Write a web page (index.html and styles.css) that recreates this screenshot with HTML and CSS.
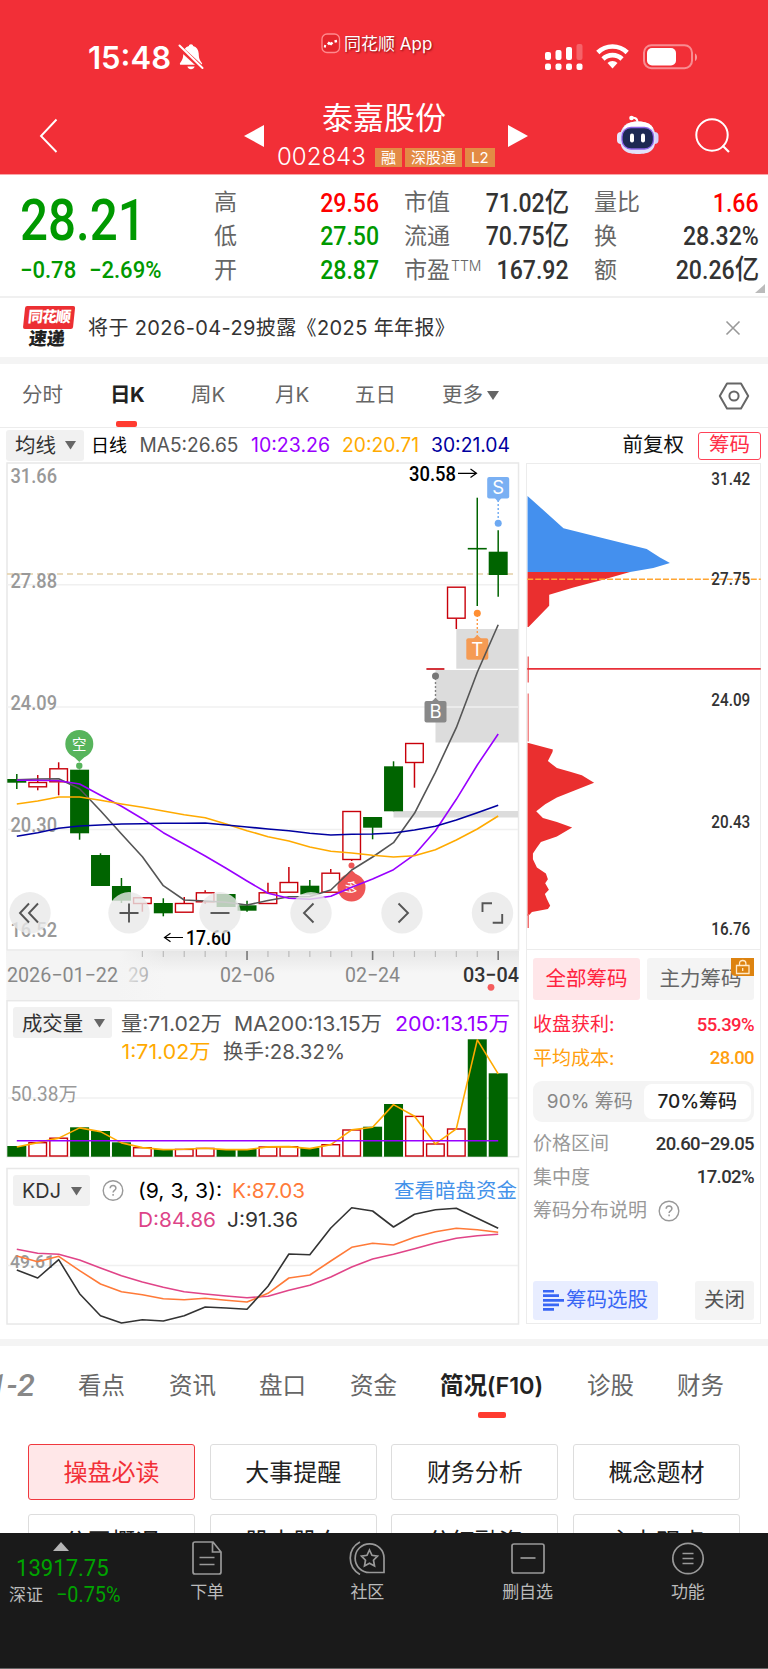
FILE: index.html
```html
<!DOCTYPE html>
<html lang="zh-CN">
<head>
<meta charset="utf-8">
<title>泰嘉股份 002843</title>
<link rel="stylesheet" href="styles.css">
</head>
<body>
<div class="app">
  <header class="top">
    <div class="status">
      <div class="clock">15:48</div>
      <svg class="bell" width="28" height="28" viewBox="0 0 28 28"><path d="M14 1.2c1.300 0 2 .8 2.100 1.800 3.600 1 5.400 3.800 5.600 7.600.2 5 1 6.600 3.200 9.400.5.8.2 1.800-.8 1.800H3.900c-1 0-1.300-1-.8-1.800 2.200-2.800 3-4.400 3.200-9.400.2-3.800 2-6.600 5.600-7.600.1-1 .8-1.800 2.100-1.800zM10.400 23.400h7.200c-.5 1.800-1.900 2.800-3.600 2.800s-3.100-1-3.600-2.800z" fill="#fff"/><path d="M1.500 3.500l24 22" stroke="#f22f37" stroke-width="5"/><path d="M2.500 2.500l23 22.500" stroke="#fff" stroke-width="2" stroke-linecap="round"/></svg>
      <div class="appname">
        <svg width="20" height="21" viewBox="0 0 20 21"><rect x="1" y="1" width="17.500" height="18.500" rx="5" fill="#e5252d" stroke="#ff8a8e" stroke-width="1.300"/><path d="M3 13l2 .5M7 11.500l1-1.500 2 1 1.500-1.500M13.500 8.500l2.500-.5" stroke="#fff" stroke-width="2.400" fill="none"/></svg>
        <span>同花顺 App</span>
      </div>
      <svg class="sys" width="156" height="28" viewBox="0 0 156 28">
        <g fill="#fff"><rect x="1" y="9" width="6" height="8" rx="2"/><rect x="11.500" y="7" width="6" height="10" rx="2"/><rect x="22" y="4" width="6" height="13" rx="2"/><rect x="32.500" y="1" width="6" height="16" rx="2" opacity=".25"/><rect x="1" y="20.500" width="6" height="6.500" rx="2"/><rect x="11.500" y="20.500" width="6" height="6.500" rx="2"/><rect x="22" y="20.500" width="6" height="6.500" rx="2"/><rect x="32.500" y="20.500" width="6" height="6.500" rx="2"/></g>
        <g fill="none" stroke="#fff" stroke-width="4.600"><path d="M53.800 9.500a21 21 0 0 1 29.400 0"/><path d="M59 16a13.500 13.500 0 0 1 19 0"/></g><path d="M63.500 20a7 7 0 0 1 10 0L68.500 25.500z" fill="#fff"/>
        <rect x="100" y="2.200" width="48" height="23" rx="7.500" fill="none" stroke="#fff" stroke-opacity=".45" stroke-width="2"/><rect x="103" y="5" width="29" height="17.500" rx="5" fill="#fff"/><path d="M151 10.500c2.700 1 2.700 6.500 0 7.500z" fill="#fff" opacity=".5"/>
      </svg>
    </div>
    <div class="nav">
      <svg class="back" width="20" height="36" viewBox="0 0 20 36"><path d="M17.500 1.500L2 18l15.500 16" fill="none" stroke="#fff" stroke-width="1.900"/></svg>
      <svg class="prev" width="20" height="22" viewBox="0 0 20 22"><path d="M20 0v22L0 11z" fill="#fff"/></svg>
      <div class="title">
        <h1>泰嘉股份</h1>
        <div class="code"><span class="num">002843</span><b>融</b><b>深股通</b><b>L2</b></div>
      </div>
      <svg class="next" width="20" height="22" viewBox="0 0 20 22"><path d="M0 0v22l20-11z" fill="#fff"/></svg>
      <svg class="bot" width="44" height="42" viewBox="0 0 44 42">
        <path d="M15 3.500c3-1.500 6.500-.5 6.500 4" stroke="#fff" stroke-width="2" fill="none"/><circle cx="15.500" cy="3" r="2.300" fill="#fff"/>
        <rect x="1" y="17" width="8" height="12" rx="4" fill="#e8e8ff"/><rect x="34.500" y="17" width="8" height="12" rx="4" fill="#d3d2fa"/>
        <path d="M22 6.500c11 0 17.500 4.500 17.500 17S33 39 22 39 4 36 4 23.500s7-17 18-17z" fill="#e2e2fa"/><path d="M22 6.500c8 0 13 2.500 15.500 7L7 13.500c3-4.500 7-7 15-7z" fill="#fff"/>
        <rect x="6" y="12.500" width="31.500" height="21.500" rx="9" fill="#1d2953" stroke="#8c65e8" stroke-width="1.300"/><rect x="14" y="18.500" width="4" height="9" rx="2" fill="#fff"/><rect x="25" y="18.500" width="4" height="9" rx="2" fill="#fff"/>
      </svg>
      <svg class="search" width="36" height="36" viewBox="0 0 36 36"><circle cx="17" cy="17" r="15.700" fill="none" stroke="#fff" stroke-width="2"/><path d="M27.500 27.500l6.500 6.500" stroke="#fff" stroke-width="2.200"/></svg>
    </div>
  </header>

  <section class="quote">
    <div class="price">
      <div class="last"><span class="din">28.21</span></div>
      <div class="chg"><span class="din">−0.78</span><span class="din">−2.69%</span></div>
    </div>
    <dl>
      <div><dt>高</dt><dd class="red"><span class="din">29.56</span></dd></div>
      <div><dt>低</dt><dd class="green"><span class="din">27.50</span></dd></div>
      <div><dt>开</dt><dd class="green"><span class="din">28.87</span></dd></div>
    </dl>
    <dl>
      <div><dt>市值</dt><dd><span class="din">71.02<i>亿</i></span></dd></div>
      <div><dt>流通</dt><dd><span class="din">70.75<i>亿</i></span></dd></div>
      <div><dt>市盈<sup>TTM</sup></dt><dd><span class="din">167.92</span></dd></div>
    </dl>
    <dl>
      <div><dt>量比</dt><dd class="red"><span class="din">1.66</span></dd></div>
      <div><dt>换</dt><dd><span class="din">28.32%</span></dd></div>
      <div><dt>额</dt><dd><span class="din">20.26<i>亿</i></span></dd></div>
    </dl>
    <svg class="corner" width="10" height="9" viewBox="0 0 10 9"><path d="M10 0v9H0z" fill="#bbb"/></svg>
  </section>

  <section class="news">
    <div class="newslogo"><b>同花顺</b><em>速递</em></div>
    <p>将于 2026-04-29披露《2025 年年报》</p>
    <svg width="16" height="16" viewBox="0 0 16 16"><path d="M1.500 1.500l13 13M14.500 1.500l-13 13" stroke="#999" stroke-width="1.600"/></svg>
  </section>

  <nav class="periods">
    <span>分时</span><span class="on">日K</span><span>周K</span><span>月K</span><span>五日</span>
    <span>更多<svg width="12" height="9" viewBox="0 0 12 9"><path d="M0 0h12L6 9z" fill="#666"/></svg></span>
    <svg class="hex" width="32" height="28" viewBox="0 0 32 28"><path d="M9 1.500h14l7.200 12.500L23 26.500H9L1.800 14z" fill="none" stroke="#666" stroke-width="2" stroke-linejoin="round"/><circle cx="16" cy="14" r="4.600" fill="none" stroke="#666" stroke-width="2"/></svg>
  </nav>

  <section class="charts">
    <div class="left">
      <svg id="legend" width="524" height="34" viewBox="0 428 524 34"></svg>
      <svg id="kline" width="524" height="538" viewBox="0 462 524 538"></svg>
      <svg id="volume" width="524" height="164" viewBox="0 1000 524 164"></svg>
      <svg id="kdj" width="524" height="164" viewBox="0 1164 524 164"></svg>
    </div>
    <div class="right">
      <div class="opts"><span>前复权</span><button>筹码</button></div>
      <div class="chips">
        <svg id="dist" width="235" height="487" viewBox="526 463 235 487"></svg>
        <div class="switch"><button class="on">全部筹码</button><button>主力筹码<svg class="lock" width="23" height="18" viewBox="0 0 23 18"><path d="M0 0h23v18H5q-5 0-5-5z" fill="#dd8310"/><path d="M5.500 7.500h12.500v8H5.500zM8.500 7V5.500q0-3 3.200-3t3.200 3V7M11.700 10v3" fill="none" stroke="#ffe9c8" stroke-width="1.300"/></svg></button></div>
        <div class="kv r"><span>收盘获利:</span><b>55.39%</b></div>
        <div class="kv o"><span>平均成本:</span><b>28.00</b></div>
        <div class="seg"><span>90% 筹码</span><span class="on">70%筹码</span></div>
        <div class="kv"><span>价格区间</span><b>20.60−29.05</b></div>
        <div class="kv"><span>集中度</span><b>17.02%</b></div>
        <div class="kv"><span>筹码分布说明<svg width="22" height="22" viewBox="0 0 22 22"><circle cx="11" cy="11" r="9.800" fill="none" stroke="#999" stroke-width="1.400"/><path d="M8.200 8.800c0-3.700 5.700-3.700 5.700 0 0 2-2.800 2.200-2.800 4.200M11.100 14.500v1.700" fill="none" stroke="#999" stroke-width="1.500"/></svg></span></div>
        <div class="foot"><button class="pick"><svg width="21" height="21" viewBox="0 0 21 21"><path d="M0 1.200h11M0 5.700h16M0 10.300h21M0 14.800h16M0 19.300h11" stroke="#3866f5" stroke-width="2.700"/></svg>筹码选股</button><button>关闭</button></div>
      </div>
    </div>
  </section>

  <nav class="tabs">
    <span class="cut">1-2</span><span>看点</span><span>资讯</span><span>盘口</span><span>资金</span><span class="on">简况(F10)</span><span>诊股</span><span>财务</span>
  </nav>
  <section class="cards">
    <button class="on">操盘必读</button><button>大事提醒</button><button>财务分析</button><button>概念题材</button>
    <button class="low">公司概况</button><button class="low">股本股东</button><button class="low">分红融资</button><button class="low">主力观点</button>
  </section>

  <footer>
    <div class="index">
      <svg width="16" height="9" viewBox="0 0 16 9"><path d="M8 0l8 9H0z" fill="#b5b5b5"/></svg>
      <div class="iv"><span class="din">13917.75</span></div>
      <div class="ic"><span>深证</span><span class="din">−0.75%</span></div>
    </div>
    <div class="item"><svg width="32" height="34" viewBox="0 0 32 34"><path d="M2 3q0-2 2-2h18l8 10v20q0 2-2 2H4q-2 0-2-2zM21.500 1v10H30M8.500 16.500h15M8.500 23.500h15" /></svg><span>下单</span></div>
    <div class="item"><svg width="36" height="34" viewBox="0 0 36 34"><path d="M20.500 2.800a14.200 14.200 0 0 1 14.500 14v14.700H20.500a14.300 14.300 0 0 1 0-28.700zM11 1C-2 8-2 26 11 33.500M20.500 9l2.500 5.300 5.500.8-4 4.100 1 5.800-5-2.800-5 2.800 1-5.800-4-4.100 5.500-.8z"/></svg><span>社区</span></div>
    <div class="item"><svg width="34" height="34" viewBox="0 0 34 34"><rect x="1" y="3" width="32" height="29" rx="2"/><path d="M9.500 17h15"/></svg><span>删自选</span></div>
    <div class="item"><svg width="34" height="34" viewBox="0 0 34 34"><circle cx="17" cy="17.500" r="15.200"/><path d="M11.500 12.500h11M11.500 17.500h11M11.500 22.500h11"/></svg><span>功能</span></div>
  </footer>
</div>
<script src="charts.js"></script>
</body>
</html>
```
FILE: styles.css
```css
* { box-sizing: border-box; }
body { margin: 0; background: #fff; font-family: Inter, "Noto Sans CJK SC", sans-serif; line-height: 1; color: #333; }
.app { width: 768px; height: 1669px; overflow: hidden; display: flex; flex-direction: column; }
svg { display: block; flex: none; }
button { font: inherit; color: inherit; border: 0; padding: 0; margin: 0; background: none; white-space: nowrap; }
h1, p, dl, dd { margin: 0; }
span { white-space: nowrap; }
.din { display: inline-block; font-family: Roboto, "Noto Sans CJK SC", sans-serif; font-weight: 500; }
.din i { font-style: normal; font-size: 27px; line-height: 0; }
.red { color: #fe0000; }
.green { color: #009900; }

.top { height: 175px; background: #f22f37; color: #fff; border-bottom: 1px solid #f9a5a8; flex: none; }
.status { height: 96px; display: flex; align-items: flex-start; padding: 32px 0 0 88px; }
.clock { width: 89px; padding-top: 10px; font-size: 31px; font-weight: 600; }
.bell { margin-top: 11px; }
.appname { display: flex; align-items: center; gap: 3px; margin-left: 116px; margin-top: 1px; width: 212px; font-size: 17px; }
.appname span { text-shadow: 1px 1px 2px rgba(90, 0, 0, .7); padding-top: 2px; }
.sys { margin: 11px 0 0 11px; }
.nav { height: 78px; display: flex; align-items: flex-start; padding-left: 39px; }
.back { margin-top: 22px; }
.prev { margin: 29px 0 0 185px; }
.title { width: 244px; }
.title h1 { font-size: 31px; font-weight: 400; padding: 6px 0 0 58px; }
.code { display: flex; align-items: center; gap: 3px; margin: 14px 0 0 13px; height: 20px; }
.code .num { font-size: 24px; font-weight: 300; width: 95px; text-align: left; }
.code b { height: 19px; line-height: 19px; padding: 0 6px; background: #e38b45; font-size: 15px; font-weight: 400; }
.next { margin-top: 29px; }
.bot { margin: 19px 0 0 88px; }
.search { margin: 22px 0 0 35px; }

.quote { height: 123px; flex: none; border-bottom: 2px solid #f0f0f0; display: flex; position: relative; padding-top: 11px; }
.price { width: 214px; padding-left: 20px; color: #009900; }
.last { height: 64px; padding-top: 5px; font-size: 57px; }
.last .din { transform: scaleX(.865); transform-origin: 0 0; }
.chg { font-size: 23px; padding-top: 9px; display: flex; gap: 10px; }
.chg .din { transform: scaleX(.96); transform-origin: 0 0; }
.quote dl { width: 165px; margin-right: 25px; display: grid; grid-template-rows: repeat(3, 33.700px); }
.quote dl:nth-of-type(3) { margin: 0; }
.quote dl div { display: flex; justify-content: space-between; align-items: center; }
dt { font-size: 23px; color: #666; white-space: nowrap; }
dt sup { font-size: 14px; vertical-align: 7px; line-height: 0; font-weight: 300; margin-left: 1px; }
dd { font-size: 25.500px; }
dd .din { transform: scaleX(.905); transform-origin: 100% 0; white-space: nowrap; }
.corner { position: absolute; right: 3px; bottom: 3px; }

.news { height: 66px; flex: none; display: flex; align-items: center; padding: 0 27px 0 22px; border-bottom: 7px solid #f4f4f4; }
.newslogo { width: 52px; display: flex; flex-direction: column; align-items: center; transform: skewX(-6deg); }
.newslogo b { width: 50px; height: 23px; line-height: 22px; background: #ec2f33; color: #fff; font-size: 15px; font-weight: 900; text-align: center; border-radius: 2px; letter-spacing: -1px; }
.newslogo em { font-size: 18px; font-weight: 900; color: #222; font-style: normal; line-height: 20px; }
.news p { font-size: 20px; flex: 1; padding-left: 14px; color: #333; white-space: nowrap; letter-spacing: .38px; }

.periods { height: 64px; flex: none; border-bottom: 1px solid #ececec; display: grid; grid-template-columns: 88px 81px 84px 80px 87px 276px auto; align-items: center; padding-left: 22px; font-size: 20.500px; color: #666; }
.periods span { position: relative; display: flex; align-items: center; gap: 4px; }
.periods .on { color: #222; font-weight: 700; letter-spacing: -.6px; }
.periods .on::after { content: ""; position: absolute; left: 6px; top: 36px; width: 21px; height: 6px; border-radius: 2px; background: #ff3b30; }

.charts { height: 918px; flex: none; display: flex; border-bottom: 7px solid #f4f4f4; }
.left { width: 524px; margin-right: 2px; }
.right { width: 235px; }
.opts { height: 35px; display: flex; align-items: center; justify-content: flex-end; gap: 14px; font-size: 20.500px; color: #111; }
.opts button { width: 63px; height: 28px; border: 1.500px solid #ff4257; border-radius: 3px; color: #ff2f47; }
.chips { height: 861px; border: 1.500px solid #ececec; display: flex; flex-direction: column; }
.chips > svg { margin: -1px 0 0 -1px; border-bottom: 1.500px solid #ececec; }
.switch { display: flex; justify-content: space-between; padding: 8px 6px 0; font-size: 20.500px; height: 58px; }
.switch button { width: 107px; height: 42px; border-radius: 3px; background: #f4f4f4; color: #666; position: relative; }
.switch .on { background: #ffe6e9; color: #ff2440; }
.lock { position: absolute; top: 0; right: 0; }
.kv { height: 33.500px; display: flex; justify-content: space-between; align-items: center; padding: 0 6px; font-size: 19px; color: #999; }
.kv span { display: flex; align-items: center; gap: 11px; }
.kv b { font-family: Roboto; font-weight: 500; font-size: 18.500px; color: #333; letter-spacing: -.6px; }
.kv.r, .kv.r b { color: #ff2440; }
.kv.o, .kv.o b { color: #ff9f10; }
.seg { margin: 6px 6px 5px; height: 41px; border-radius: 9px; background: #f4f4f4; padding: 3px; display: flex; font-size: 19px; color: #888; }
.seg span { flex: 1; display: flex; align-items: center; justify-content: center; border-radius: 8px; white-space: pre; }
.seg .on { background: #fff; color: #222; font-weight: 500; }
.foot { margin-top: auto; padding: 0 6px 3px; display: flex; justify-content: space-between; font-size: 20.500px; }
.foot button { height: 39px; width: 59px; border-radius: 3px; background: #f4f4f4; color: #555; }
.foot .pick { width: 125px; background: #e8edff; color: #3866f5; display: flex; align-items: center; justify-content: center; gap: 2px; }

.tabs { height: 98px; flex: none; display: grid; grid-template-columns: 78px 91px 90px 91px 90px 147px 90px auto; padding-top: 28px; font-size: 23.500px; color: #666; }
.tabs span { position: relative; height: 24px; }
.tabs .cut { font-family: Roboto; font-weight: 500; font-style: italic; font-size: 32px; line-height: 22px; color: #888; margin-left: -11px; }
.tabs .on { color: #222; font-weight: 600; letter-spacing: -.1px; }
.tabs .on::after { content: ""; position: absolute; left: 38px; top: 38px; width: 28px; height: 6px; border-radius: 2px; background: #ff3b30; }
.cards { height: 89px; flex: none; overflow: hidden; display: grid; grid-template-columns: repeat(4, 167px); grid-auto-rows: 56px; gap: 14px 14.700px; padding-left: 28px; font-size: 24px; }
.cards button { border: 1.500px solid #ddd; border-radius: 3px; color: #222; padding-top: 1px; }
.cards .low { padding-top: 0; }
.cards .on { border-color: #f0383e; background: #ffe7e8; color: #f22f37; }

footer { flex: 1; background: #1a1a1a; border-bottom: 1px solid #666; display: flex; color: #bbb; }
.index { width: 127px; }
.index svg { margin: 9px 0 0 53px; }
.iv { color: #00a300; font-size: 24px; margin: 5px 0 0 16px; height: 28px; }
.iv .din { transform: scaleX(.92); transform-origin: 0 0; font-weight: 400; }
.ic { display: flex; gap: 13px; margin-left: 9px; font-size: 17px; align-items: center; }
.ic .din { color: #00a300; font-size: 22px; font-weight: 400; transform: scaleX(.9); transform-origin: 0 0; }
.item { width: 161px; display: flex; flex-direction: column; align-items: center; padding-top: 8px; gap: 9px; font-size: 17px; }
.item svg { fill: none; stroke: #999; stroke-width: 1.700; }
```
FILE: charts.js
```javascript
const X = i => 16.8 + 20.93 * i;
const GREEN = '#006400', RED = '#c8000a';
const UI = 'Inter, "Noto Sans CJK SC", sans-serif';
const DIN = 'Roboto, "Noto Sans CJK SC", sans-serif';

const text = (x, y, s, size, fill, len, weight = 400, font = UI) =>
  `<text x="${x}" y="${y}" font-size="${size}" fill="${fill}" textLength="${len}" lengthAdjust="spacingAndGlyphs" font-weight="${weight}" font-family='${font}'>${s}</text>`;
const rect = (x, y, w, h, fill, extra = '') => `<rect x="${x}" y="${y}" width="${w}" height="${h}" fill="${fill}" ${extra}/>`;
const line = (x1, y1, x2, y2, stroke, w = 1.5, extra = '') =>
  `<line x1="${x1}" y1="${y1}" x2="${x2}" y2="${y2}" stroke="${stroke}" stroke-width="${w}" ${extra}/>`;
const poly = (ys, stroke, w = 1.6) =>
  `<polyline points="${ys.map((y, i) => X(i).toFixed(1) + ',' + y).join(' ')}" fill="none" stroke="${stroke}" stroke-width="${w}" stroke-linejoin="round"/>`;
const caret = (x, y) => `<path d="M${x} ${y}h11l-5.500 8.500z" fill="#666"/>`;
const frame = (y1, y2) => rect(7, y1, 511.500, y2 - y1, '#fff', 'stroke="#e8e8e8" stroke-width="1.500"');
const put = (id, s) => { document.getElementById(id).innerHTML = s; };

put('legend',
  rect(6, 430, 78, 31, '#f1f1f1', 'rx="3"') + text(15, 452.500, '均线', 20.500, '#333', 41) + caret(65, 441) +
  text(91, 452, '日线', 18, '#000', 36) + text(139.5, 452, 'MA5:26.65', 19.500, '#555', 99) +
  text(251, 452, '10:23.26', 19.500, '#9900ff', 79) + text(342, 452, '20:20.71', 19.500, '#ffaa00', 77) +
  text(431, 452, '30:21.04', 19.500, '#0000a0', 79));

// [type, body top, body bottom, high, low]
const candles = [
  ['g',779,782.7,774,789],['r',782,787.3,775,790.3],['r',768.3,782.3,762.3,795.3],['g',769.7,833.3,769.7,839.7],
  ['g',855,886,853.3,886],['g',886,900.7,878,903],['r',897.3,904,897.3,911.7],['g',903,913.3,898.3,916.3],
  ['r',903,912.7,897,912.7],['r',892.3,902.3,890.3,903.7],['g',894,907,894,907],['g',905.3,910.7,900.7,911.7],
  ['r',892.3,904,882.7,904],['r',882,892.7,867,893],['g',885.7,894.5,880,894.5],['r',872.7,892.7,869,892.7],
  ['r',811,860,811,861],['g',817,827.7,817,839.3],['g',766.3,811.3,761.3,811.3],['r',743,763,743,787.7],
  ['r',668.5,669.5,668.5,669.5],['r',586.7,618.7,586.7,629],['g',547.9,549.5,497.7,606],['g',551.7,575,530.3,596.7]];
const ma5 = [779.7,779,778.7,788.7,810.7,834,856.7,885.7,900,901,902.3,905,900.5,896.7,896.5,890,870,857,842.7,813.3,772.3,727.7,672.3,624.7];
const ma10 = [780.3,780.3,780.7,784,795.3,806.3,818.7,832.7,844.3,856,868.3,881,893.3,898.3,899.3,896.3,887.3,879,869.7,854.7,830.7,799.3,765,734];
const ma20 = [804,801,797,797,800.3,804,807.3,811,814.7,817.7,824,830.7,836.7,841,847,851.3,853,855.3,857,855.7,849.7,840,829,816];
const ma30 = [836.3,832.7,828.3,826,825,824,823.7,823.3,823.3,823,825,827,829,830.7,833.3,835,834.3,834,833,830,826.3,820,812.7,805.3];

function candle([t, a, b, hi, lo], i) {
  const x = X(i);
  if (t === 'g') return line(x, hi, x, lo, GREEN, 1.5) + rect(x - 9.5, a, 19, b - a, GREEN);
  if (b - a < 2) return line(x - 9, a + .5, x + 9, a + .5, RED, 1.6);
  return line(x, hi, x, a, RED, 1.5) + line(x, b, x, lo, RED, 1.5) + rect(x - 8.8, a + .5, 17.6, b - a - 1, '#fff', `stroke="${RED}" stroke-width="1.400"`);
}
const badge = (x, y, color, s) => rect(x - 11, y, 22, 21.500, color, 'rx="2"') +
  `<text x="${x}" y="${y + 17.3}" font-size="18.500" fill="#fff" text-anchor="middle" font-family="Inter">${s}</text>`;

let k = frame(463, 950);
[[456.3,629,39.700],[435.5,670,72.500],[393.5,811,6.500]].forEach(([x, y, h]) => k += rect(x, y, 518 - x, h, '#dcdcdc'));
[584.7, 707, 829.5].forEach(y => k += line(7, y, 518, y, '#f0f0f0', 1.5));
k += line(7, 574, 515, 574, '#e3cfa6', 1.4, 'stroke-dasharray="6 4"');
[['31.66',483],['27.88',587.5],['24.09',709.7],['20.30',832],['16.52',936.7]].forEach(([s, y]) => k += text(10.5, y, s, 20, '#999', 46.5, 500, DIN));
k += candles.map(candle).join('');
k += line(498.2, 500, 498.2, 519, '#6da9f2', 1.4, 'stroke-dasharray="2 2"') + '<circle cx="498.2" cy="523.3" r="3.500" fill="#6da9f2"/><path d="M494 497h8.400l-4.200 5z" fill="#7ab0f3"/>' + badge(498.2, 477, '#7ab0f3', 'S');
k += line(477.3, 615, 477.3, 638, '#ff9a45', 1.4, 'stroke-dasharray="2 2"') + '<circle cx="477.3" cy="613.3" r="3.500" fill="#ff8f33"/><path d="M473 639h8.600l-4.300-4z" fill="#f59b54"/>' + badge(477.3, 638.3, '#f59b54', 'T');
k += line(435.5, 678, 435.5, 701, '#808080', 1.4, 'stroke-dasharray="2 2"') + '<circle cx="435.5" cy="676" r="3.500" fill="#777"/><path d="M431 702h9l-4.500-4z" fill="#888"/>' + badge(435.5, 701, '#888', 'B');
k += '<path d="M73 756h12.600l-6.300 6z" fill="#57b45c"/><circle cx="79.3" cy="744" r="14" fill="#57b45c"/><circle cx="79.3" cy="765.7" r="3.200" fill="#57b45c"/>' + text(72, 750, '空', 15, '#fff', 14.5);
k += '<path d="M345 876h13l-6.500-6z" fill="#ee5656"/><circle cx="351.5" cy="887.5" r="14" fill="#ee5656"/><circle cx="351.5" cy="865.5" r="3" fill="#ee5656"/><g transform="rotate(30 351.5 887.5)">' + text(344, 893.5, '多', 15, '#fff', 14.5) + '</g>';
k += poly(ma5, '#555') + poly(ma10, '#9900ff') + poly(ma20, '#ffaa00') + poly(ma30, '#0000a0');
k += text(409, 480.5, '30.58', 20, '#000', 47, 500, DIN) + '<path d="M458 473.300h18M470.500 469l6 4.300-6 4.300" fill="none" stroke="#000" stroke-width="1.200"/>';
k += '<path d="M183 937.500h-18M170.500 933.200l-6 4.300 6 4.300" fill="none" stroke="#000" stroke-width="1.200"/>' + text(186, 945, '17.60', 20, '#000', 45, 500, DIN);
const icons = {
  30: 'M29 903.500l-9 9.500 9 9.500M38 903.500l-9 9.500 9 9.500', 129: 'M119.500 913h19M129 903.500v19', 220: 'M210.500 913h19',
  311: 'M313.500 903.500l-9.500 9.500 9.500 9.500', 402: 'M398.500 903.500l9.500 9.500-9.500 9.500', 492.5: 'M482.500 912v-8.700h9.500M502.200 914v8.700h-9.500' };
for (const x in icons) k += `<circle cx="${x}" cy="912.8" r="20.700" fill="#e8e8e8" fill-opacity=".8"/><path d="${icons[x]}" fill="none" stroke="#555" stroke-width="1.900"/>`;
k += '<defs><linearGradient id="ax" x2="0" y2="1"><stop stop-color="#e6e6e6"/><stop offset=".45" stop-color="#f6f6f6"/><stop offset="1" stop-color="#f6f6f6"/></linearGradient><linearGradient id="fd"><stop stop-color="#f4f4f4"/><stop offset=".7" stop-color="#f4f4f4"/><stop offset="1" stop-color="#f4f4f4" stop-opacity="0"/></linearGradient></defs>';
k += rect(6.5, 951, 512.500, 49, 'url(#ax)') + text(128, 982, '29', 21, '#888', 21, 400, DIN) + rect(6.5, 951, 160, 49, 'url(#fd)');
for (let i = 6; i < 24; i++) { const m = [11, 17, 23].includes(i); k += line(X(i), 951, X(i), m ? 960 : 957, m ? '#777' : '#bbb', m ? 1.6 : 1.2); }
k += text(7, 982, '2026−01−22', 21, '#888', 111, 400, DIN) + text(220, 982, '02−06', 21, '#888', 55, 400, DIN) + text(345, 982, '02−24', 21, '#888', 55, 400, DIN) + text(463, 982, '03−04', 21, '#333', 56, 500, DIN);
k += '<circle cx="491" cy="987.300" r="3.400" fill="#f55c5c"/>';
put('kline', k);

const vol = [1146,1142,1137.5,1127.3,1131,1142.3,1147,1149,1148.7,1147.7,1149,1149,1146.3,1146,1148,1144,1129.3,1126.7,1104,1115.7,1143.3,1128.3,1039.3,1073.3];
let v = frame(1000.7, 1156.7) + line(7, 1098, 518, 1098, '#f0f0f0', 1.5) + text(10.5, 1101, '50.38万', 19.5, '#999', 67, 400, DIN);
v += vol.map((y, i) => candles[i][0] === 'g' ? rect(X(i) - 9.5, y, 19, 1156.7 - y, GREEN) : rect(X(i) - 8.8, y + .7, 17.6, 1155.3 - y, '#fff', `stroke="${RED}" stroke-width="1.400"`)).join('');
v += poly(vol.map((y, i) => y + (i === 0 ? 1 : .6)), '#ffaa00') + poly(vol.map(() => 1140.8), '#9900ff');
v += rect(13, 1007, 99, 31, '#f1f1f1', 'rx="3"') + text(22, 1030.5, '成交量', 20, '#333', 61) + caret(94, 1019);
v += text(121, 1031, '量:71.02万', 20, '#555', 101) + text(234, 1031, 'MA200:13.15万', 20, '#555', 148) + text(395, 1031, '200:13.15万', 20, '#9900ff', 115);
v += text(121.5, 1059, '1:71.02万', 20, '#ffaa00', 89) + text(223, 1059, '换手:28.32%', 20, '#555', 122);
put('volume', v);

const K = [1256,1261.7,1256.3,1270.7,1284,1291.7,1294.7,1298.7,1299.7,1298.3,1300.3,1302,1293.3,1278,1275,1261,1247.3,1243.3,1245,1237.3,1231.7,1228.3,1229.7,1232.3];
const D = [1249.3,1253.3,1254.3,1260,1268,1275.7,1282,1287.3,1291.7,1294,1296,1297.7,1296.3,1290.3,1285.3,1277,1267,1259,1254.3,1248.7,1243,1238.3,1235.7,1234.3];
const J = [1270,1278,1259.7,1293.7,1315.7,1323,1319.7,1321,1315.7,1307,1308,1309.3,1286.3,1254,1254.7,1228,1207.7,1211,1227,1214.3,1209.7,1208.3,1218.3,1228.3];
put('kdj', frame(1168.5, 1324) + line(7, 1265.5, 518, 1265.5, '#f0f0f0', 1.5) + text(10, 1268, '49.61', 19, '#999', 45, 500, DIN) +
  rect(13, 1175, 77, 31, '#f1f1f1', 'rx="3"') + text(22, 1197.5, 'KDJ', 20, '#333', 39) + caret(71, 1187) +
  '<circle cx="113" cy="1190.500" r="9.800" fill="none" stroke="#999" stroke-width="1.400"/><path d="M110.200 1188.300c0-3.700 5.700-3.700 5.700 0 0 2-2.800 2.200-2.800 4.200M113.100 1194v1.700" fill="none" stroke="#999" stroke-width="1.500"/>' +
  text(138, 1198, '(9, 3, 3):', 20, '#000', 84) + text(232, 1198, 'K:87.03', 20, '#ff7a38', 73) + text(394, 1198, '查看暗盘资金', 20.5, '#4492ea', 123) +
  text(138, 1226.5, 'D:84.86', 20, '#dd4488', 78) + text(227, 1226.5, 'J:91.36', 20, '#333', 71) +
  poly(D, '#e04488') + poly(K, '#ff7a38') + poly(J, '#333'));

const shape = (pts, fill) => `<polygon points="${pts.map(([x, y]) => (520 + x / 3).toFixed(1) + ',' + (460 + y / 3).toFixed(1)).join(' ')}" fill="${fill}"/>`;
put('dist',
  shape([[22,108],[130,205],[250,235],[380,268],[420,293],[450,310],[400,325],[330,337],[22,337]], '#4490ee') +
  shape([[22,337],[330,337],[240,362],[160,383],[87,405],[87,438],[25,502],[22,502]], '#ea2f2f') +
  shape([[22,850],[98,870],[97,878],[83,905],[110,926],[150,937],[185,948],[222,970],[165,993],[110,1015],[75,1035],[48,1056],[68,1076],[110,1088],[156,1105],[110,1132],[62,1148],[50,1165],[38,1183],[38,1200],[50,1225],[77,1243],[83,1260],[75,1272],[86,1292],[74,1305],[80,1320],[90,1340],[83,1350],[35,1359],[25,1370],[22,1370]], '#ea2f2f') +
  line(528, 657, 528, 683, '#ee6666', 1.4) + line(528, 694, 528, 742, '#f08080', 1.4) + line(528, 915, 528, 929, '#ee6666', 1.4) +
  line(527, 669.3, 761, 669.3, '#e83038', 2) + line(527, 579.5, 761, 579.5, '#ffa533', 1.6, 'stroke-dasharray="6 2"') +
  [['31.42',485.5],['27.75',585],['24.09',707],['20.43',829],['16.76',936]].map(([s, y]) => text(711.5, y, s, 18, '#333', 39, 500, DIN)).join(''));
```
